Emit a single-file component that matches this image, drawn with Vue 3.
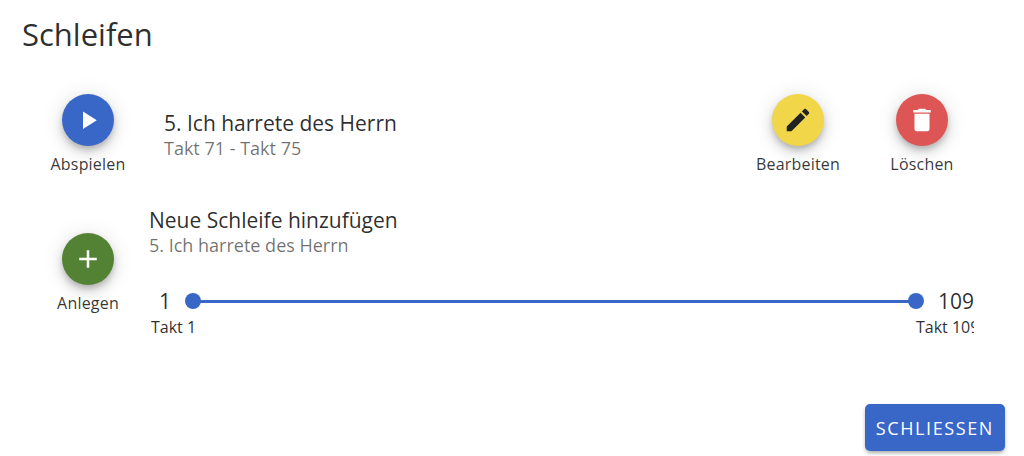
<script setup>
import { ref } from 'vue'

const first = 1
const last = 109
const start = ref(first)
const end = ref(last)
const song = '5. Ich harrete des Herrn'
</script>

<template>
  <main class="dialog">
    <h1 class="title">Schleifen</h1>

    <section class="row loop">
      <div class="action">
        <button id="play" class="fab blue" type="button" aria-labelledby="play-label">
          <svg viewBox="0 0 24 24" aria-hidden="true"><path d="M8 5.14v14l11-7-11-7z" /></svg>
        </button>
        <label id="play-label" for="play">Abspielen</label>
      </div>
      <div class="text indent">
        <h2>{{ song }}</h2>
        <p>Takt 71 - Takt 75</p>
      </div>
      <div class="action">
        <button id="edit" class="fab yellow" type="button" aria-labelledby="edit-label">
          <svg viewBox="0 0 24 24" aria-hidden="true"><path d="M20.71 7.04c.39-.39.39-1.04 0-1.41l-2.34-2.34c-.37-.39-1.02-.39-1.41 0l-1.84 1.83 3.75 3.75M3 17.25V21h3.75L17.81 9.93l-3.75-3.75L3 17.25z" /></svg>
        </button>
        <label id="edit-label" for="edit">Bearbeiten</label>
      </div>
      <div class="action">
        <button id="remove" class="fab red" type="button" aria-labelledby="remove-label">
          <svg viewBox="0 0 24 24" aria-hidden="true"><path d="M19 4h-3.5l-1-1h-5l-1 1H5v2h14M6 19a2 2 0 0 0 2 2h8a2 2 0 0 0 2-2V7H6v12z" /></svg>
        </button>
        <label id="remove-label" for="remove">Löschen</label>
      </div>
    </section>

    <section class="row create">
      <div class="action add">
        <button id="add" class="fab green" type="button" aria-labelledby="add-label">
          <svg viewBox="0 0 24 24" aria-hidden="true"><path d="M19 13h-6v6h-2v-6H5v-2h6V5h2v6h6v2z" /></svg>
        </button>
        <label id="add-label" for="add">Anlegen</label>
      </div>
      <div class="text">
        <h2>Neue Schleife hinzufügen</h2>
        <p>{{ song }}</p>
        <div class="slider">
          <output for="from">{{ start }}</output>
          <div class="range">
            <input id="from" v-model.number="start" type="range" :min="first" :max="last" aria-label="Takt 1">
            <input id="to" v-model.number="end" type="range" :min="first" :max="last" aria-label="Takt 109">
          </div>
          <output for="to">{{ end }}</output>
        </div>
        <div class="ticks">
          <label for="from">Takt {{ first }}</label>
          <label class="end" for="to">Takt {{ last }}</label>
        </div>
      </div>
    </section>

    <footer>
      <button class="close" type="button">SCHLIESSEN</button>
    </footer>
  </main>
</template>

<style>
body {
  background: #fff;
}
</style>

<style scoped>
.dialog {
  box-sizing: border-box;
  padding: 14px 19px 5px 22px;
  color: rgba(0, 0, 0, 0.84);
  font-family: "Open Sans", "Noto Sans", sans-serif;
}
h1, h2, p {
  margin: 0;
  font-weight: 400;
}
.title {
  font-size: 31px;
  line-height: 40px;
}
.row {
  display: flex;
}
.loop {
  margin: 40px 21px 0 4px;
}
.create {
  margin: 31px 31px 0 4px;
}
.action {
  flex: 0 0 124px;
  display: flex;
  flex-direction: column;
  align-items: center;
  color: rgba(0, 0, 0, 0.8);
}
.action label {
  margin-top: 6px;
  font-size: 16px;
  line-height: 24px;
  letter-spacing: 0.0125em;
}
.add {
  padding-top: 26px;
}
.create .text {
  margin-left: -1px;
}
.fab {
  display: flex;
  align-items: center;
  justify-content: center;
  width: 52px;
  height: 52px;
  padding: 0;
  border: 0;
  border-radius: 50%;
  color: #fff;
  box-shadow: 0 4px 6px -1px rgba(0, 0, 0, 0.2), 0 7px 13px rgba(0, 0, 0, 0.12), 0 1px 22px rgba(0, 0, 0, 0.1);
}
.fab svg {
  width: 30px;
  height: 30px;
  fill: currentColor;
}
.blue { background: #3867c8; }
.yellow { background: #f0d648; color: #222; }
.red { background: #de5555; }
.green { background: #548235; }
.text {
  flex: 1;
  min-width: 0;
}
.indent {
  padding: 16px 0 0 14px;
}
h2 {
  font-size: 21px;
  line-height: 27px;
}
.text p {
  color: rgba(0, 0, 0, 0.56);
  font-size: 18px;
  line-height: 23px;
}
.slider {
  display: flex;
  align-items: center;
  gap: 14px;
  margin-top: 30px;
  padding-left: 10px;
  font-size: 21px;
  line-height: 28px;
}
.range {
  flex: 1;
  display: grid;
  align-items: center;
  height: 16px;
  background: linear-gradient(#3867c8, #3867c8) center / calc(100% - 16px) 3px no-repeat;
}
.range input {
  grid-area: 1 / 1;
  width: 100%;
  height: 16px;
  margin: 0;
  appearance: none;
  background: transparent;
  pointer-events: none;
}
.range input::-webkit-slider-thumb {
  appearance: none;
  width: 16px;
  height: 16px;
  border-radius: 50%;
  background: #3867c8;
  pointer-events: auto;
}
.ticks {
  display: flex;
  justify-content: space-between;
  overflow: hidden;
  padding-left: 2px;
  font-size: 16px;
  line-height: 24px;
}
.end {
  width: 58px;
  white-space: nowrap;
}
footer {
  display: flex;
  justify-content: flex-end;
  margin-top: 65px;
}
.close {
  height: 47px;
  padding: 0 11px;
  border: 0;
  border-radius: 5px;
  background: #3867c8;
  box-shadow: 0 3px 4px -2px rgba(0, 0, 0, 0.25), 0 2px 4px rgba(0, 0, 0, 0.18);
  color: #fff;
  font: 500 18px "Open Sans", "Noto Sans", sans-serif;
  letter-spacing: 0.0893em;
}
</style>
